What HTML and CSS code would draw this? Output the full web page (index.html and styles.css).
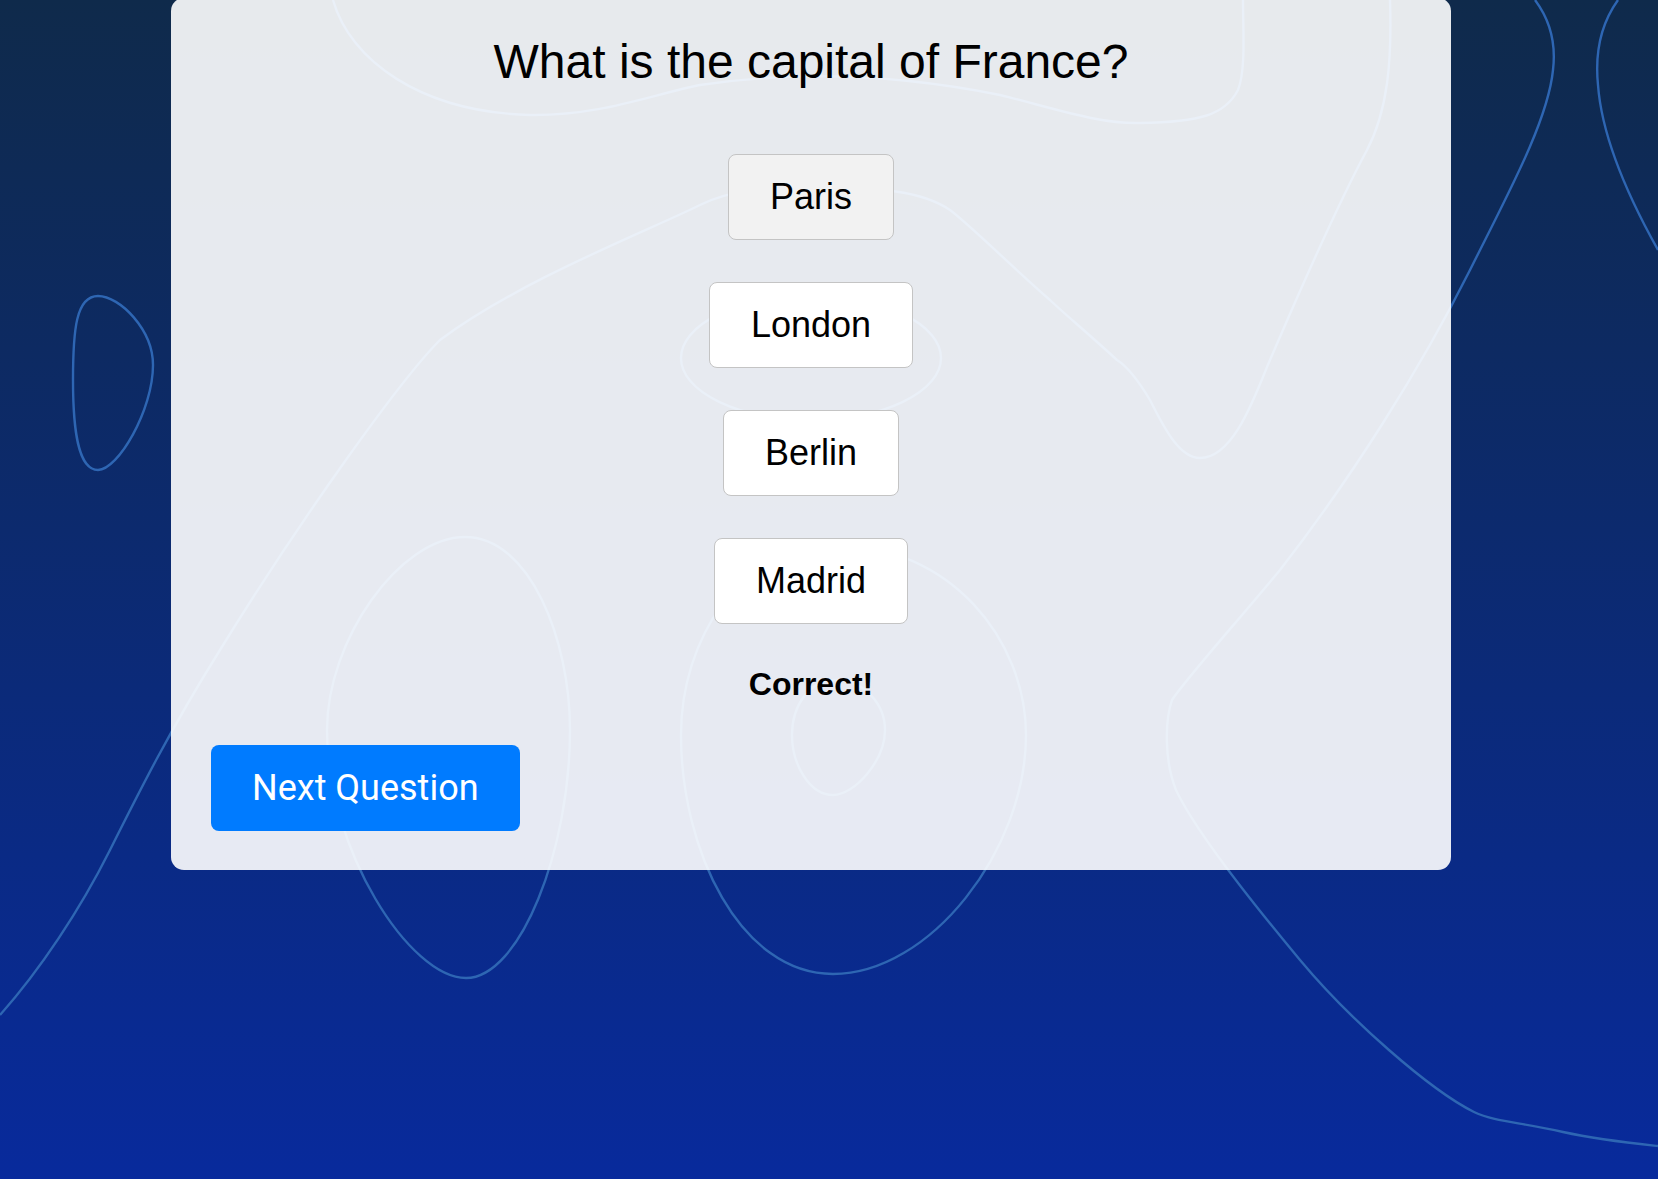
FILE: index.html
```html
<!DOCTYPE html>
<html lang="en">
<head>
<meta charset="utf-8">
<title>Quiz</title>
<link rel="stylesheet" href="styles.css">
</head>
<body>
<svg class="contours" viewBox="0 0 1658 1179" width="1658" height="1179" aria-hidden="true">
  <g fill="none" stroke="#2e66b3" stroke-width="2.4">
    <path d="M 98 296 C 120 296, 153 330, 153 365 C 153 410, 118 470, 98 470 C 78 470, 73 430, 73 380 C 73 330, 76 296, 98 296 Z"/>
    <path d="M 1535 0 C 1550 20, 1556 45, 1553 70 C 1548 120, 1510 190, 1470 270 C 1420 370, 1350 480, 1280 570 C 1230 630, 1185 680, 1172 700 C 1165 720, 1164 760, 1176 790 C 1195 830, 1250 900, 1300 960 C 1350 1020, 1430 1090, 1474 1112 C 1495 1122, 1520 1122, 1563 1132 C 1600 1140, 1630 1143, 1658 1146"/>
    <path d="M 1618 0 C 1600 25, 1595 55, 1598 85 C 1602 140, 1630 200, 1658 250"/>
    <path d="M 333 0 C 350 60, 420 112, 530 115 C 600 116, 650 95, 700 85 C 800 70, 900 75, 1000 95 C 1060 110, 1100 124, 1140 123 C 1200 122, 1225 115, 1238 90 C 1246 70, 1243 30, 1243 0"/>
    <path d="M 1390 0 C 1392 60, 1388 110, 1367 150 C 1340 200, 1300 290, 1267 367 C 1250 410, 1230 458, 1200 458 C 1180 458, 1165 430, 1150 400 C 1135 375, 1125 365, 1117 360 C 1090 335, 1060 310, 1050 300 C 1010 265, 970 225, 950 210 C 920 190, 880 188, 815 188 C 760 188, 730 190, 700 205 C 650 230, 520 280, 440 340 C 400 380, 300 520, 220 650 C 170 730, 140 790, 110 850 C 80 910, 40 970, 0 1015"/>
    <ellipse cx="811" cy="358" rx="130" ry="62"/>
    <path d="M 465 537 C 530 537, 570 640, 570 730 C 570 850, 520 978, 466 978 C 410 978, 327 850, 327 730 C 327 640, 400 537, 465 537 Z"/>
    <path d="M 835 545 C 950 545, 1026 640, 1026 735 C 1026 850, 930 974, 833 974 C 740 974, 681 850, 681 735 C 681 640, 740 545, 835 545 Z"/>
    <path d="M 835 680 C 865 680, 885 705, 885 730 C 885 760, 855 795, 833 795 C 810 795, 792 765, 792 735 C 792 705, 810 680, 835 680 Z"/>
  </g>
</svg>
<main class="card">
  <h1 class="question">What is the capital of France?</h1>
  <button class="answer answer-selected">Paris</button>
  <button class="answer">London</button>
  <button class="answer">Berlin</button>
  <button class="answer">Madrid</button>
  <p class="feedback">Correct!</p>
  <button class="next">Next Question</button>
</main>
</body>
</html>
```
FILE: styles.css
```css
html, body {
  margin: 0;
  padding: 0;
}

body {
  position: relative;
  width: 1658px;
  height: 1179px;
  overflow: hidden;
  background: linear-gradient(180deg, #0f2a4b 0%, #0c2a6e 45%, #082a9c 100%);
  font-family: "Liberation Sans", Arial, sans-serif;
}

.contours {
  position: absolute;
  left: 0;
  top: 0;
  z-index: 0;
}

.card {
  position: relative;
  z-index: 1;
  box-sizing: border-box;
  width: 1280px;
  margin: -2px 0 0 171px;
  padding: 36px 40px 39px;
  background: rgba(255, 255, 255, 0.9);
  border-radius: 13px;
  display: flex;
  flex-direction: column;
  align-items: center;
  gap: 42px;
}

.question {
  margin: 0 0 22px;
  font-size: 48px;
  line-height: 56px;
  font-weight: normal;
  color: #000;
}

.answer {
  margin: 0;
  padding: 21px 41px;
  font-family: "Liberation Sans", Arial, sans-serif;
  font-size: 36px;
  line-height: 42px;
  color: #000;
  background: #fff;
  border: 1px solid #c4c4c4;
  border-radius: 8px;
}

.answer-selected {
  background: #f2f2f2;
}

.feedback {
  margin: 0;
  font-size: 32px;
  line-height: 37px;
  font-weight: bold;
  color: #000;
}

.next {
  align-self: flex-start;
  margin: 0;
  padding: 22px 41px;
  font-family: Roboto, "Liberation Sans", sans-serif;
  font-size: 36px;
  line-height: 42px;
  color: #fff;
  background: #007bff;
  border: none;
  border-radius: 8px;
}
```
